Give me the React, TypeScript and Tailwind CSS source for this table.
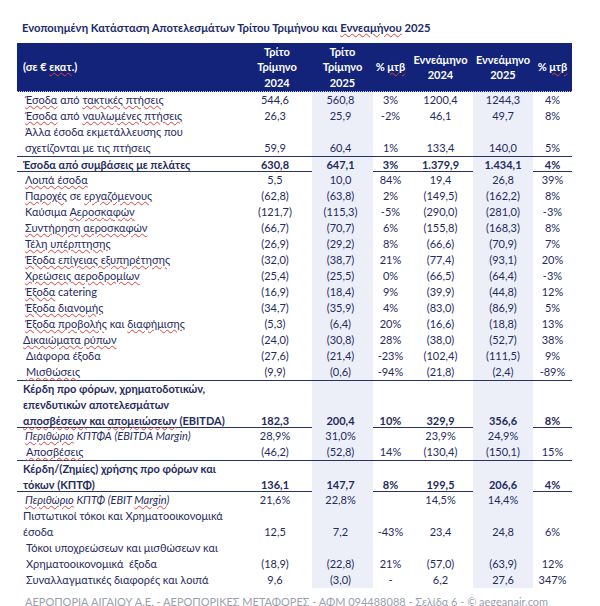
import React from "react";

type Row = {
  label: React.ReactNode[];
  values: string[];
  bold?: boolean;
  italic?: boolean;
  line?: boolean;
  pl?: string;
};

function Sq({ children }: { children: React.ReactNode }) {
  return (
    <span className="underline decoration-wavy decoration-[#e0403a] decoration-1 underline-offset-[1px]">
      {children}
    </span>
  );
}

const rows: Row[] = [
  { label: [<><Sq>Έσοδα</Sq> από <Sq>τακτικές πτήσεις</Sq></>], values: ["544,6", "560,8", "3%", "1200,4", "1244,3", "4%"] },
  { label: [<><Sq>Έσοδα</Sq> από <Sq>ναυλωμένες πτήσεις</Sq></>], values: ["26,3", "25,9", "-2%", "46,1", "49,7", "8%"] },
  { label: ["Άλλα έσοδα εκμετάλλευσης που", "σχετίζονται με τις πτήσεις"], values: ["59,9", "60,4", "1%", "133,4", "140,0", "5%"] },
  { label: ["Έσοδα από συμβάσεις με πελάτες"], values: ["630,8", "647,1", "3%", "1.379,9", "1.434,1", "4%"], bold: true, line: true, pl: "pl-[6px]" },
  { label: [<><Sq>Λοιπά έσοδα</Sq></>], values: ["5,5", "10,0", "84%", "19,4", "26,8", "39%"] },
  { label: [<><Sq>Παροχές</Sq> σε <Sq>εργαζόμενους</Sq></>], values: ["(62,8)", "(63,8)", "2%", "(149,5)", "(162,2)", "8%"] },
  { label: [<>Καύσιμα <Sq>Αεροσκαφών</Sq></>], values: ["(121,7)", "(115,3)", "-5%", "(290,0)", "(281,0)", "-3%"] },
  { label: [<><Sq>Συντήρηση αεροσκαφών</Sq></>], values: ["(66,7)", "(70,7)", "6%", "(155,8)", "(168,3)", "8%"] },
  { label: [<><Sq>Τέλη υπέρπτησης</Sq></>], values: ["(26,9)", "(29,2)", "8%", "(66,6)", "(70,9)", "7%"] },
  { label: [<><Sq>Έξοδα επίγειας εξυπηρέτησης</Sq></>], values: ["(32,0)", "(38,7)", "21%", "(77,4)", "(93,1)", "20%"] },
  { label: [<><Sq>Χρεώσεις αεροδρομίων</Sq></>], values: ["(25,4)", "(25,5)", "0%", "(66,5)", "(64,4)", "-3%"] },
  { label: [<><Sq>Έξοδα</Sq> catering</>], values: ["(16,9)", "(18,4)", "9%", "(39,9)", "(44,8)", "12%"] },
  { label: [<><Sq>Έξοδα διανομής</Sq></>], values: ["(34,7)", "(35,9)", "4%", "(83,0)", "(86,9)", "5%"] },
  { label: [<><Sq>Έξοδα προβολής</Sq> και <Sq>διαφήμισης</Sq></>], values: ["(5,3)", "(6,4)", "20%", "(16,6)", "(18,8)", "13%"] },
  { label: [<><Sq>Δικαιώματα ρύπων</Sq></>], values: ["(24,0)", "(30,8)", "28%", "(38,0)", "(52,7)", "38%"], pl: "pl-[6px]" },
  { label: ["Διάφορα έξοδα"], values: ["(27,6)", "(21,4)", "-23%", "(102,4)", "(111,5)", "9%"], pl: "pl-[9px]" },
  { label: [<><Sq>Μισθώσεις</Sq></>], values: ["(9,9)", "(0,6)", "-94%", "(21,8)", "(2,4)", "-89%"], pl: "pl-[9px]" },
  {
    label: [
      "Κέρδη προ φόρων, χρηματοδοτικών,",
      "επενδυτικών αποτελεσμάτων",
      <><Sq>αποσβέσεων</Sq> και <Sq>απομειώσεων</Sq> (EBITDA)</>,
    ],
    values: ["182,3", "200,4", "10%", "329,9", "356,6", "8%"],
    bold: true,
    line: true,
    pl: "pl-[6px]",
  },
  { label: [<><Sq>Περιθώριο</Sq> ΚΠΤΦΑ (EBITDA Margin)</>], values: ["28,9%", "31,0%", "", "23,9%", "24,9%", ""], italic: true },
  { label: [<><Sq>Αποσβέσεις</Sq></>], values: ["(46,2)", "(52,8)", "14%", "(130,4)", "(150,1)", "15%"], pl: "pl-[9px]" },
  {
    label: ["Κέρδη/(Ζημίες) χρήσης προ φόρων και", "τόκων (ΚΠΤΦ)"],
    values: ["136,1", "147,7", "8%", "199,5", "206,6", "4%"],
    bold: true,
    line: true,
    pl: "pl-[6px]",
  },
  { label: [<><Sq>Περιθώριο</Sq> ΚΠΤΦ (EBIT <Sq>Margin</Sq>)</>], values: ["21,6%", "22,8%", "", "14,5%", "14,4%", ""], italic: true },
  { label: ["Πιστωτικοί τόκοι και Χρηματοοικονομικά", "έσοδα"], values: ["12,5", "7,2", "-43%", "23,4", "24,8", "6%"], pl: "pl-[6px]" },
  { label: ["Τόκοι υποχρεώσεων και μισθώσεων και", "Χρηματοοικονομικά  έξοδα"], values: ["(18,9)", "(22,8)", "21%", "(57,0)", "(63,9)", "12%"], pl: "pl-[9px]" },
  { label: ["Συναλλαγματικές διαφορές και λοιπά"], values: ["9,6", "(3,0)", "-", "6,2", "27,6", "347%"], pl: "pl-[9px]" },
];

const cols = "grid grid-cols-[231px_64px_61px_35px_65px_60px_39px]";
const valPad = ["pr-[10px]", "pr-[4px]", "", "", "", ""];

export default function App() {
  return (
    <div
      className="w-[600px] h-[606px] overflow-hidden bg-white text-[#1f2b5e]"
      style={{ fontFamily: "Lato, 'Noto Sans', sans-serif" }}
    >
      <div className="pl-[22px] pt-[20px] text-[11.25px] leading-[16px] font-bold text-[#1c2a6a]">
        Ενοποιημένη Κατάσταση Αποτελεσμάτων Τρίτου Τριμήνου και <Sq>Εννεαμήνου</Sq> 2025
      </div>

      <div className="ml-[17px] mt-[7px] w-[555px] text-[11px]">
        <div className={`${cols} h-[49px] bg-[#13237a] text-white font-bold leading-[15.5px] border-b border-dotted border-white/70`}>
          <div className="flex items-center pl-[6px]">
            <span>
              (σε € <Sq>εκατ</Sq>.)
            </span>
          </div>
          <div className="flex items-center justify-center text-center pr-[6px]">
            Τρίτο
            <br />
            Τρίμηνο
            <br />
            2024
          </div>
          <div className="flex items-center justify-center text-center">
            Τρίτο
            <br />
            Τρίμηνο
            <br />
            2025
          </div>
          <div className="flex items-center justify-center">
            <span>
              % <Sq>μτβ</Sq>
            </span>
          </div>
          <div className="flex items-center justify-center text-center">
            Εννεάμηνο
            <br />
            2024
          </div>
          <div className="flex items-center justify-center text-center">
            Εννεάμηνο
            <br />
            2025
          </div>
          <div className="flex items-center justify-center">
            <span>
              % <Sq>μτβ</Sq>
            </span>
          </div>
        </div>

        {rows.map((r, i) => (
          <div
            key={i}
            className={`${cols} leading-[16px] ${r.line ? "border-y border-[#26336b]" : ""} ${r.bold ? "font-bold" : ""}`}
            style={{ height: r.label.length * 16 }}
          >
            <div className={`${r.pl ?? "pl-[8px]"} ${r.italic ? "italic" : ""} whitespace-pre`}>
              {r.label.map((l, j) => (
                <div key={j}>{l}</div>
              ))}
            </div>
            {r.values.map((v, j) => (
              <div
                key={j}
                className={`flex items-end justify-center ${valPad[j]} ${j === 1 || j === 4 ? "bg-[#eceff8]" : ""}`}
              >
                {v}
              </div>
            ))}
          </div>
        ))}
      </div>

      <div className="pl-[25px] mt-[6px] text-[11px] leading-[16px] text-[#9aa0b0] whitespace-nowrap">
        ΑΕΡΟΠΟΡΙΑ ΑΙΓΑΙΟΥ Α.Ε. - ΑΕΡΟΠΟΡΙΚΕΣ ΜΕΤΑΦΟΡΕΣ - ΑΦΜ 094488088 - Σελίδα 6 - © aegeanair.com
      </div>
    </div>
  );
}
